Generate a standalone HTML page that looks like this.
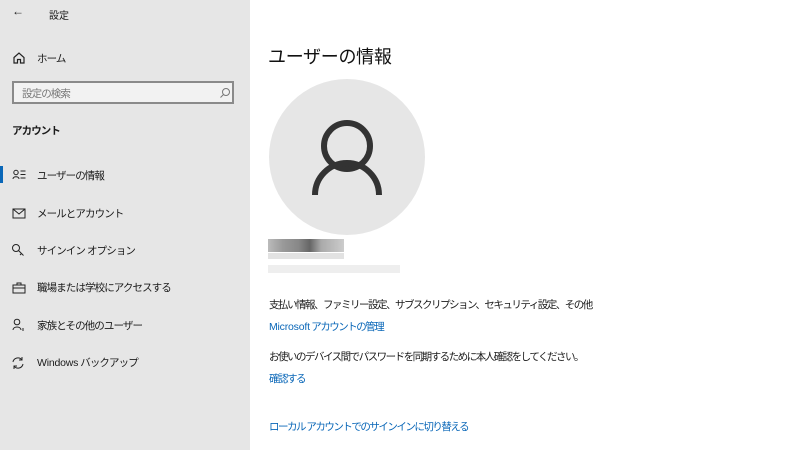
<!DOCTYPE html><html><head><meta charset="utf-8"><style>
body{margin:0;width:800px;height:450px;overflow:hidden;background:#fff;font-family:"Liberation Sans","Noto Sans CJK JP",sans-serif;color:#1a1a1a;position:relative}
.side{position:absolute;left:0;top:0;width:250px;height:450px;background:#e6e6e6}
.a{position:absolute;white-space:nowrap}
.s{font-size:10.5px;letter-spacing:-0.9px}
.r{font-size:10.5px;letter-spacing:-1.5px}
.ic{position:absolute}
.lk{color:#0a67b8;font-size:10.5px;letter-spacing:-1.5px}
.l{letter-spacing:-0.2px}
</style></head><body>
<div class="side">
<div class="a" style="left:12px;top:4px;font-size:12px">←</div>
<div class="a" style="left:49px;top:7px;font-size:10px">設定</div>
<svg class="ic" style="left:12px;top:51px" width="14" height="14" viewBox="0 0 14 14" fill="none" stroke="#222" stroke-width="1.2"><path d="M2 6.5L7 2l5 4.5V12H8.5V8.5h-3V12H2z"/></svg>
<div class="a s" style="left:37px;top:51px">ホーム</div>
<div class="a" style="left:12px;top:81px;width:222px;height:23px;border:2px solid #8a8a8a;background:#f2f2f2;box-sizing:border-box"></div>
<div class="a s" style="left:22px;top:86px;color:#777">設定の検索</div>
<svg class="ic" style="left:219px;top:87px" width="12" height="12" viewBox="0 0 12 12" fill="none" stroke="#777"><circle cx="7" cy="5" r="3.5"/><path d="M4.5 7.5L1.5 10.5"/></svg>
<div class="a s" style="left:12px;top:123px;font-weight:bold">アカウント</div>
<div class="a" style="left:0;top:166px;width:3px;height:17px;background:#0a67b8"></div>
<svg class="ic" style="left:12px;top:169px" width="14" height="12" viewBox="0 0 14 12" fill="none" stroke="#222"><circle cx="4" cy="3.5" r="2.2"/><path d="M1 10c0-3 6-3 6 0M8.5 2h5M8.5 5.5h5M8.5 9h5"/></svg>
<div class="a s" style="left:37px;top:168px">ユーザーの情報</div>
<svg class="ic" style="left:12px;top:208px" width="14" height="11" viewBox="0 0 14 11" fill="none" stroke="#222"><rect x="1" y="1" width="12" height="9"/><path d="M1 1l6 5 6-5"/></svg>
<div class="a s" style="left:37px;top:206px">メールとアカウント</div>
<svg class="ic" style="left:11px;top:243px" width="14" height="14" viewBox="0 0 14 14" fill="none" stroke="#222"><circle cx="5" cy="5" r="3.5"/><path d="M7.5 7.5L12.5 12.5M10.5 10.5l-1.5 1.5"/></svg>
<div class="a s" style="left:37px;top:243px">サインイン オプション</div>
<svg class="ic" style="left:12px;top:282px" width="14" height="12" viewBox="0 0 14 12" fill="none" stroke="#222"><rect x="1" y="3" width="12" height="8"/><path d="M5 3V1h4v2M1 6h12"/></svg>
<div class="a s" style="left:37px;top:280px">職場または学校にアクセスする</div>
<svg class="ic" style="left:12px;top:318px" width="14" height="14" viewBox="0 0 14 14" fill="none" stroke="#222"><circle cx="5" cy="4" r="2.8"/><path d="M1 12c0-4 8-4 8 0M11 10v3"/></svg>
<div class="a s" style="left:37px;top:318px">家族とその他のユーザー</div>
<svg class="ic" style="left:11px;top:356px" width="14" height="14" viewBox="0 0 14 14" fill="none" stroke="#222"><path d="M2 6a5 5 0 0 1 9-2M12 8a5 5 0 0 1-9 2M11 1v3H8M3 13v-3h3"/></svg>
<div class="a s" style="left:37px;top:355px"><span class="l">Windows</span> バックアップ</div>
</div>
<div class="a" style="left:268px;top:43px;font-size:18px;color:#111;letter-spacing:-0.3px">ユーザーの情報</div>
<svg class="ic" style="left:269px;top:79px" width="156" height="156"><circle cx="78" cy="78" r="78" fill="#e6e6e6"/><circle cx="78" cy="67" r="23" fill="none" stroke="#333" stroke-width="6"/><path d="M46 116a32 32 0 0 1 64 0" fill="none" stroke="#333" stroke-width="6"/></svg>
<div class="a" style="left:268px;top:239px;width:76px;height:13px;background:linear-gradient(90deg,#bbb,#999 20%,#888 40%,#666 55%,#aaa 70%,#ccc)"></div>
<div class="a" style="left:268px;top:253px;width:76px;height:6px;background:#e2e2e2"></div>
<div class="a" style="left:268px;top:265px;width:132px;height:8px;background:#eee"></div>
<div class="a r" style="left:269px;top:297px">支払い情報、ファミリー設定、サブスクリプション、セキュリティ設定、その他</div>
<div class="a lk" style="left:269px;top:319px"><span class="l">Microsoft</span> アカウントの管理</div>
<div class="a r" style="left:269px;top:349px">お使いのデバイス間でパスワードを同期するために本人確認をしてください。</div>
<div class="a lk" style="left:269px;top:371px">確認する</div>
<div class="a lk" style="left:269px;top:419px">ローカル アカウントでのサインインに切り替える</div>
</body></html>
